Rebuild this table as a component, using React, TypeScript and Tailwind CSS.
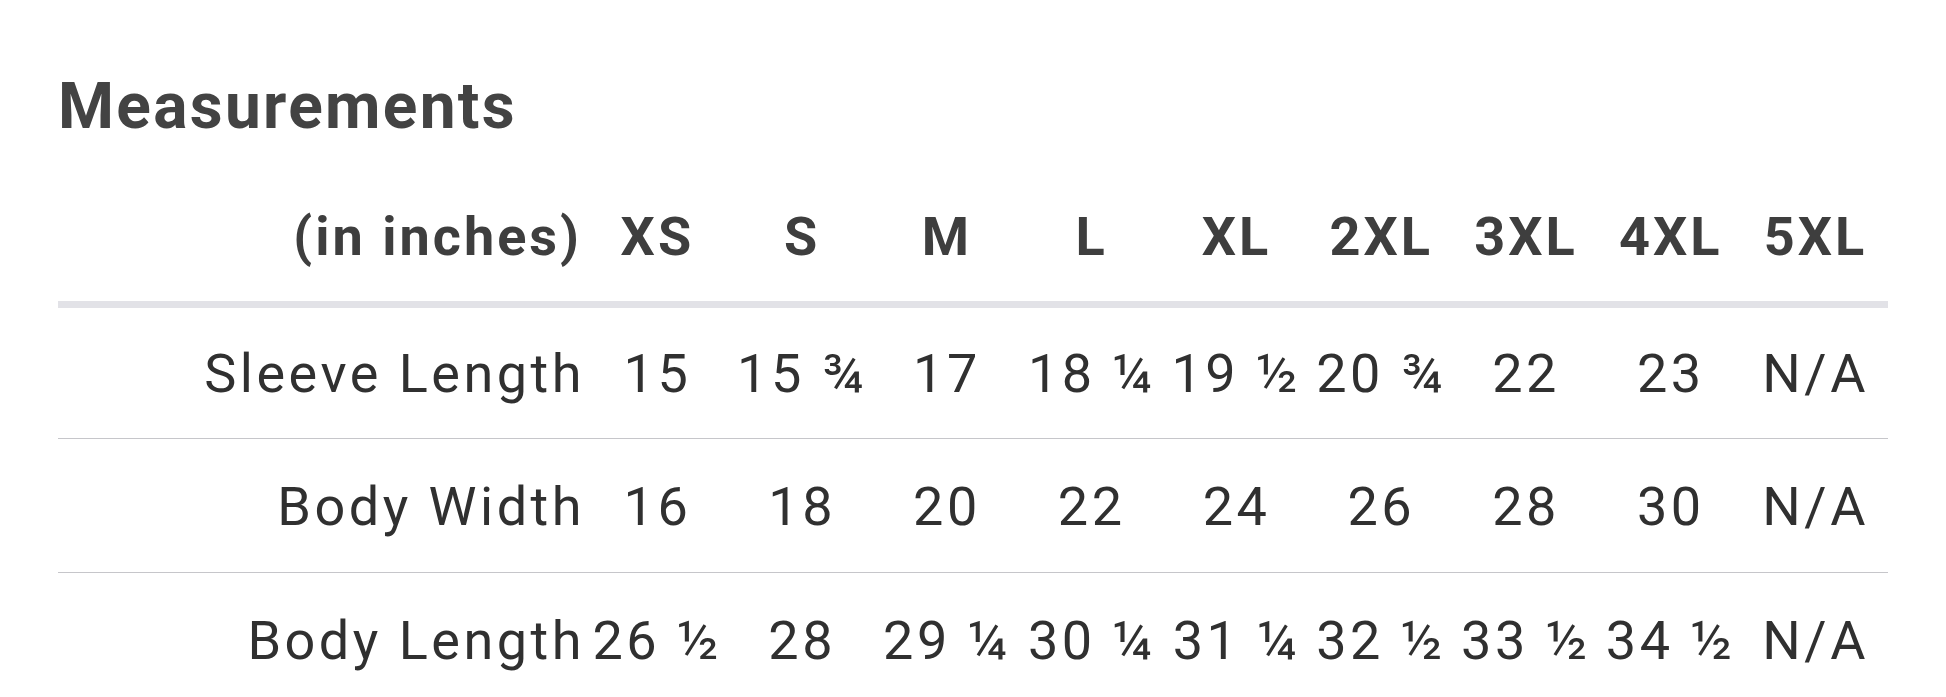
import React from "react";

const sizes = ["XS", "S", "M", "L", "XL", "2XL", "3XL", "4XL", "5XL"];
const rows: { label: string; values: string[] }[] = [
  { label: "Sleeve Length", values: ["15", "15 ¾", "17", "18 ¼", "19 ½", "20 ¾", "22", "23", "N/A"] },
  { label: "Body Width", values: ["16", "18", "20", "22", "24", "26", "28", "30", "N/A"] },
  { label: "Body Length", values: ["26 ½", "28", "29 ¼", "30 ¼", "31 ¼", "32 ½", "33 ½", "34 ½", "N/A"] },
];

export default function App() {
  return (
    <div
      className="w-[1946px] h-[697px] overflow-hidden bg-white pl-[58px]"
      style={{ fontFamily: "Roboto, 'Noto Sans', Arial, sans-serif" }}
    >
      <h1 className="pt-[75px] text-[64px] leading-none font-bold tracking-[2.3px] text-[#434343]">
        Measurements
      </h1>
      <div className="w-[1830px]">
        <div className="grid grid-cols-[527px_repeat(9,minmax(0,1fr))] pt-[71px] pb-[37px] border-b-[7px] border-[#e2e2e7] text-[54px] leading-none font-bold tracking-[3px] text-[#3e3e3e]">
          <div className="text-right pr-[3px] whitespace-nowrap">(in inches)</div>
          {sizes.map((s) => (
            <div key={s} className="text-center whitespace-nowrap">
              {s}
            </div>
          ))}
        </div>
        {rows.map((r, idx) => (
          <div
            key={r.label}
            className={
              idx === 0
                ? "grid grid-cols-[527px_repeat(9,minmax(0,1fr))] pt-[39px] pb-[37px] border-b border-[#c6c6ca] text-[54px] leading-none tracking-[3.5px] text-[#303030]"
                : "grid grid-cols-[527px_repeat(9,minmax(0,1fr))] pt-[41px] pb-[38px] border-b border-[#c6c6ca] text-[54px] leading-none tracking-[3.5px] text-[#303030]"
            }
          >
            <div className="text-right whitespace-nowrap">{r.label}</div>
            {r.values.map((v, i) => (
              <div key={i} className="text-center whitespace-nowrap">
                {v}
              </div>
            ))}
          </div>
        ))}
      </div>
    </div>
  );
}
